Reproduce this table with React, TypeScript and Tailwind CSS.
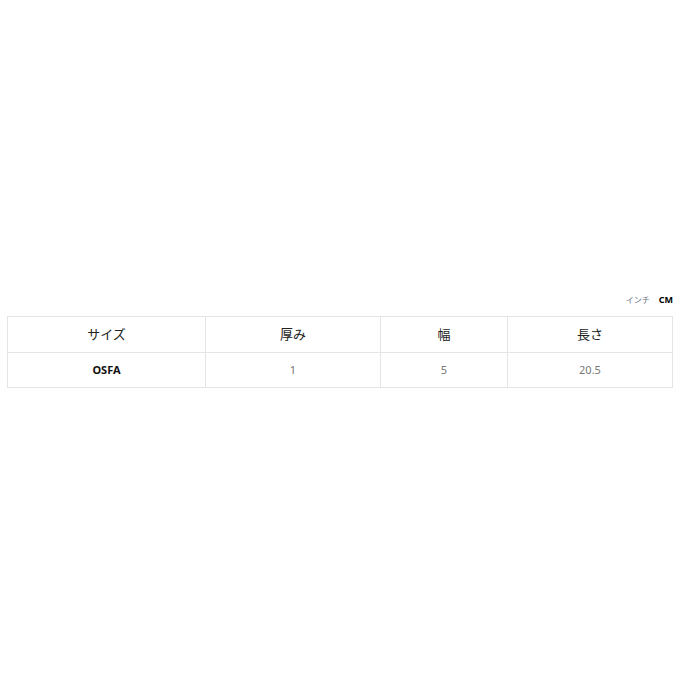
import React, { useState } from 'react';

const rows = [{ size: 'OSFA', thickness: '1', width: '5', length: '20.5' }];

const App: React.FC = () => {
  const [unit, setUnit] = useState<'in' | 'cm'>('cm');

  return (
    <div
      className="min-h-screen bg-white flex flex-col justify-center px-[7px] pt-[3px]"
      style={{ fontFamily: '"Noto Sans", "Noto Sans CJK JP", sans-serif' }}
    >
      <div className="flex justify-end items-center gap-[9px] mb-[12px] leading-none">
        <button
          onClick={() => setUnit('in')}
          className={unit === 'in' ? 'text-[9px] font-bold text-black' : 'text-[8px] text-gray-500'}
        >
          インチ
        </button>
        <button
          onClick={() => setUnit('cm')}
          className={unit === 'cm' ? 'text-[9px] font-bold text-black' : 'text-[8px] text-gray-500'}
        >
          CM
        </button>
      </div>

      <table className="w-full border-collapse border border-[#e5e5e5] text-[13px]">
        <thead>
          <tr className="h-[36px]">
            <th className="w-[198px] border border-[#e5e5e5] font-normal text-[#222]">サイズ</th>
            <th className="w-[175px] border border-[#e5e5e5] font-normal text-[#222]">厚み</th>
            <th className="w-[127px] border border-[#e5e5e5] font-normal text-[#222]">幅</th>
            <th className="border border-[#e5e5e5] font-normal text-[#222]">長さ</th>
          </tr>
        </thead>
        <tbody>
          {rows.map(r => (
            <tr key={r.size} className="h-[35px] text-center">
              <td className="border border-[#e5e5e5] font-bold text-[11px] text-[#111]">{r.size}</td>
              <td className="border border-[#e5e5e5] text-[#777] text-[11px]">{r.thickness}</td>
              <td className="border border-[#e5e5e5] text-[#777] text-[11px]">{r.width}</td>
              <td className="border border-[#e5e5e5] text-[#777] text-[11px]">{r.length}</td>
            </tr>
          ))}
        </tbody>
      </table>
    </div>
  );
};

export default App;
